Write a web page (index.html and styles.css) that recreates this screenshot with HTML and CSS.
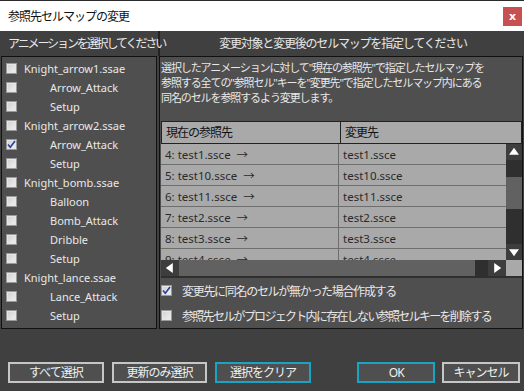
FILE: index.html
```html
<!DOCTYPE html>
<html lang="ja">
<head>
    <meta charset="UTF-8">
    <title>参照先セルマップの変更</title>
    <link rel="stylesheet" href="styles.css">
</head>
<body>
    <div class="window">
        <div class="titlebar">
            <span class="title">参照先セルマップの変更</span>
            <span class="close">x</span>
        </div>

        <div class="content">
            <div class="headers">
                <div class="header-left">アニメーションを選択してください</div>
                <div class="header-right">変更対象と変更後のセルマップを指定してください</div>
            </div>

            <div class="panels">
                <div class="anim-list">
                    <div class="item"><span class="check"></span><span class="label">Knight_arrow1.ssae</span></div>
                    <div class="item sub"><span class="check"></span><span class="label">Arrow_Attack</span></div>
                    <div class="item sub"><span class="check"></span><span class="label">Setup</span></div>
                    <div class="item"><span class="check"></span><span class="label">Knight_arrow2.ssae</span></div>
                    <div class="item sub"><span class="check checked"><svg viewBox="0 0 11 11"><path d="M2 5.5 L4.3 8.3 L9 2" /></svg></span><span class="label">Arrow_Attack</span></div>
                    <div class="item sub"><span class="check"></span><span class="label">Setup</span></div>
                    <div class="item"><span class="check"></span><span class="label">Knight_bomb.ssae</span></div>
                    <div class="item sub"><span class="check"></span><span class="label">Balloon</span></div>
                    <div class="item sub"><span class="check"></span><span class="label">Bomb_Attack</span></div>
                    <div class="item sub"><span class="check"></span><span class="label">Dribble</span></div>
                    <div class="item sub"><span class="check"></span><span class="label">Setup</span></div>
                    <div class="item"><span class="check"></span><span class="label">Knight_lance.ssae</span></div>
                    <div class="item sub"><span class="check"></span><span class="label">Lance_Attack</span></div>
                    <div class="item sub"><span class="check"></span><span class="label">Setup</span></div>
                </div>

                <div class="target-panel">
                    <div class="desc">
                        選択したアニメーションに対して"現在の参照先"で指定したセルマップを<br>
                        参照する全ての"参照セル"キーを"変更先"で指定したセルマップ内にある<br>
                        同名のセルを参照するよう変更します。
                    </div>

                    <div class="grid">
                        <div class="grid-head">
                            <div class="hcell col-a">現在の参照先</div>
                            <div class="hcell col-b">変更先</div>
                        </div>
                        <div class="grid-body">
                            <div class="rows">
                                <div class="row"><div class="cell col-a">4: test1.ssce &nbsp;→</div><div class="cell col-b">test1.ssce</div></div>
                                <div class="row"><div class="cell col-a">5: test10.ssce &nbsp;→</div><div class="cell col-b">test10.ssce</div></div>
                                <div class="row"><div class="cell col-a">6: test11.ssce &nbsp;→</div><div class="cell col-b">test11.ssce</div></div>
                                <div class="row"><div class="cell col-a">7: test2.ssce &nbsp;→</div><div class="cell col-b">test2.ssce</div></div>
                                <div class="row"><div class="cell col-a">8: test3.ssce &nbsp;→</div><div class="cell col-b">test3.ssce</div></div>
                                <div class="row"><div class="cell col-a">9: test4.ssce &nbsp;→</div><div class="cell col-b">test4.ssce</div></div>
                            </div>
                            <div class="vscroll">
                                <div class="arrow up"></div>
                                <div class="track-gap"></div>
                                <div class="vthumb"></div>
                                <div class="track"></div>
                                <div class="arrow down"></div>
                            </div>
                        </div>
                        <div class="hscroll-row">
                            <div class="hscroll">
                                <div class="arrow left"></div>
                                <div class="hthumb"></div>
                                <div class="track"></div>
                                <div class="arrow right"></div>
                            </div>
                            <div class="corner"></div>
                        </div>
                    </div>

                    <div class="options">
                        <div class="option"><span class="check checked"><svg viewBox="0 0 11 11"><path d="M2 5.5 L4.3 8.3 L9 2" /></svg></span><span>変更先に同名のセルが無かった場合作成する</span></div>
                        <div class="option long"><span class="check"></span><span>参照先セルがプロジェクト内に存在しない参照セルキーを削除する</span></div>
                    </div>
                </div>
            </div>

            <div class="buttons">
                <div class="btn wide">すべて選択</div>
                <div class="btn wide">更新のみ選択</div>
                <div class="btn wide focus">選択をクリア</div>
                <div class="spacer"></div>
                <div class="btn focus">OK</div>
                <div class="btn">キャンセル</div>
            </div>
        </div>
    </div>
</body>
</html>
```

FILE: styles.css
```css
body {
    margin: 0;
    font-family: "Noto Sans", "Noto Sans CJK JP", sans-serif;
    font-size: 11px;
    background: #404040;
}
.window {
    width: 524px;
    height: 391px;
    overflow: hidden;
}
.titlebar {
    height: 30px;
    border-top: 1px solid #2b2b2b;
    background: #fff;
    display: flex;
    align-items: center;
    justify-content: space-between;
    padding: 0 2px 0 8px;
    color: #111;
    font-size: 12px;
    letter-spacing: -1px;
}
.close {
    width: 19px;
    height: 19px;
    background: #c75050;
    color: #fff;
    font-weight: bold;
    font-size: 11px;
    letter-spacing: 0;
    display: flex;
    align-items: center;
    justify-content: center;
    font-family: "DejaVu Sans", sans-serif;
    line-height: 1;
}
.content {
    background: #404040;
    height: 360px;
    color: #e8e8e8;
}
.headers {
    height: 25px;
    display: flex;
    font-size: 12px;
    letter-spacing: -1.2px;
}
.header-left {
    width: 150px;
    padding-left: 8px;
    border-right: 2px solid #222;
    white-space: nowrap;
    line-height: 25px;
    letter-spacing: -2.1px;
}
.header-right {
    flex: 1;
    text-align: center;
    line-height: 25px;
    padding-left: 2px;
}
.panels {
    display: flex;
    gap: 2px;
    padding: 0 1px 0 1px;
    height: 273px;
}
.anim-list {
    width: 154px;
    border: 1px solid #111;
    background: #4f4f4f;
    padding-top: 2px;
}
.item {
    height: 19px;
    display: flex;
    align-items: center;
    padding-left: 4px;
    white-space: nowrap;
}
.item .label {
    margin-left: 7px;
}
.item.sub .label {
    margin-left: 33px;
}
.check {
    width: 9px;
    height: 9px;
    flex: none;
    border: 1px solid #9a9a9a;
    background: linear-gradient(135deg, #cfcfcf, #f2f2f2);
    box-shadow: inset 0 0 0 1px #e6e6e6;
    display: inline-block;
    position: relative;
}
.check svg {
    position: absolute;
    left: -1px;
    top: -1px;
    width: 11px;
    height: 11px;
}
.check path {
    fill: none;
    stroke: #2b3f9c;
    stroke-width: 1.6;
}
.target-panel {
    flex: 1;
    border: 1px solid #111;
    background: #4f4f4f;
    display: flex;
    flex-direction: column;
}
.desc {
    height: 61px;
    padding: 3px 0 0 1px;
    line-height: 15px;
    letter-spacing: -1.1px;
    white-space: nowrap;
}
.grid {
    margin: 0 0 0 1px;
    background: #a9a9a9;
    border-top: 1px solid #222;
    border-bottom: 2px solid #2f2f2f;
    color: #2a2a2a;
}
.grid-head {
    display: flex;
    height: 21px;
    border-bottom: 1px solid #222;
    color: #111;
}
.hcell {
    line-height: 21px;
    padding-left: 4px;
    border-left: 1px solid #222;
    border-right: 1px solid #222;
    font-size: 12px;
    letter-spacing: -1px;
}
.col-a {
    width: 174px;
}
.col-b {
    flex: 1;
}
.hcell.col-b {
    border-left: none;
}
.grid-body {
    display: flex;
    height: 116px;
    overflow: hidden;
}
.rows {
    flex: 1;
}
.row {
    display: flex;
    height: 20px;
    border-bottom: 1px solid #6e6e6e;
}
.cell {
    line-height: 21px;
    padding-left: 4px;
    white-space: nowrap;
    font-size: 11.5px;
}
.cell.col-a {
    width: 173px;
    border-right: 1px solid #6e6e6e;
}
.vscroll {
    width: 16px;
    display: flex;
    flex-direction: column;
    background: #2f2f2f;
}
.arrow {
    background: #3d3d3d;
    position: relative;
}
.vscroll .arrow {
    height: 16px;
}
.track-gap {
    height: 17px;
}
.vthumb {
    height: 32px;
    background: #616161;
}
.track {
    flex: 1;
}
.arrow::after {
    content: "";
    position: absolute;
    left: 50%;
    top: 50%;
    border: 5px solid transparent;
}
.arrow.up::after {
    border-bottom: 7px solid #fff;
    border-top: 0;
    transform: translate(-50%, -60%);
}
.arrow.down::after {
    border-top: 7px solid #fff;
    border-bottom: 0;
    transform: translate(-50%, -40%);
}
.hscroll-row {
    display: flex;
    height: 16px;
}
.hscroll {
    flex: 1;
    display: flex;
    background: #2f2f2f;
}
.hscroll .arrow {
    width: 18px;
}
.hthumb {
    width: 296px;
    background: #616161;
}
.arrow.left::after {
    border-right: 7px solid #fff;
    border-left: 0;
    transform: translate(-60%, -50%);
}
.arrow.right::after {
    border-left: 7px solid #fff;
    border-right: 0;
    transform: translate(-40%, -50%);
}
.corner {
    width: 16px;
    background: #a9a9a9;
}
.options {
    padding: 3px 0 0 1px;
    display: flex;
    flex-direction: column;
    gap: 6px;
    font-size: 12px;
    letter-spacing: -1.3px;
}
.option {
    display: flex;
    align-items: center;
    gap: 10px;
    height: 19px;
    white-space: nowrap;
}
.option.long {
    letter-spacing: -1.7px;
}
.buttons {
    display: flex;
    gap: 7px;
    padding: 33px 4px 0 8px;
}
.btn {
    width: 75px;
    height: 17px;
    border: 2px solid #c6c6c6;
    background: #4f4f4f;
    color: #f0f0f0;
    text-align: center;
    line-height: 17px;
    font-size: 12px;
    letter-spacing: -1px;
}
.btn.wide {
    width: 93px;
    margin-right: 1px;
}
.btn.focus {
    border-color: #19a4c6;
}
.spacer {
    width: 32px;
}
```
